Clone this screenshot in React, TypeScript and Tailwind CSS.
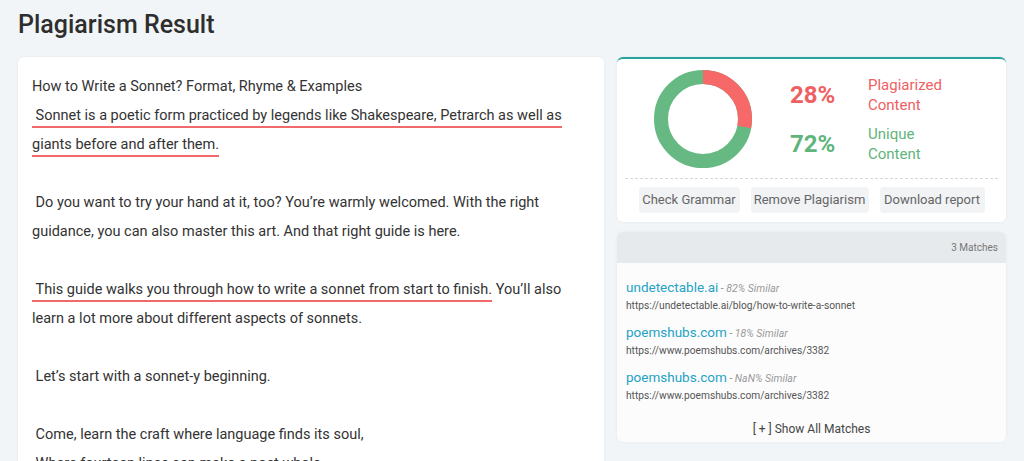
import React from 'react';

// Donut chart for the plagiarized / unique split
const Donut: React.FC<{ percent: number }> = ({ percent }) => {
  const r = 42;
  const c = 2 * Math.PI * r;
  const red = (percent / 100) * c;
  return (
    <svg width="100" height="100" viewBox="0 0 100 100" className="shrink-0">
      <circle cx="50" cy="50" r={r} fill="none" stroke="#67b983" strokeWidth="14" />
      <circle
        cx="50"
        cy="50"
        r={r}
        fill="none"
        stroke="#f76868"
        strokeWidth="14"
        strokeDasharray={`${red} ${c - red}`}
        transform="rotate(-90 50 50)"
      />
    </svg>
  );
};

const Mark: React.FC<{ children: React.ReactNode }> = ({ children }) => (
  <span className="border-b-2 border-[#f06a6c] pb-[2px] [box-decoration-break:clone]">{children}</span>
);

interface Match {
  domain: string;
  similar: string;
  url: string;
}

const matches: Match[] = [
  { domain: 'undetectable.ai', similar: '82%', url: 'https://undetectable.ai/blog/how-to-write-a-sonnet' },
  { domain: 'poemshubs.com', similar: '18%', url: 'https://www.poemshubs.com/archives/3382' },
  { domain: 'poemshubs.com', similar: 'NaN%', url: 'https://www.poemshubs.com/archives/3382' },
];

const App: React.FC = () => {
  return (
    <div className="min-h-screen bg-[#f2f5f7] px-[18px] font-['Roboto',sans-serif] text-[#333]">
      <h1 className="pt-[9px] text-[25px] font-medium leading-[32px] text-[#2e2e2e]">Plagiarism Result</h1>

      <div className="mt-[16px] flex gap-[13px]">
        {/* Submitted text */}
        <div className="h-[420px] w-[586px] shrink-0 rounded-md bg-white pl-[14px] pr-[20px] pt-[15px] text-[14.5px] leading-[29px] text-[#333] shadow-[0_0_3px_rgba(0,0,0,0.06)]">
          <p>How to Write a Sonnet? Format, Rhyme &amp; Examples</p>
          <p>
            <Mark>&nbsp;Sonnet is a poetic form practiced by legends like Shakespeare, Petrarch as well as giants before and after them.</Mark>
          </p>
          <p>&nbsp;</p>
          <p>&nbsp;Do you want to try your hand at it, too? You’re warmly welcomed. With the right guidance, you can also master this art. And that right guide is here.</p>
          <p>&nbsp;</p>
          <p>
            <Mark>&nbsp;This guide walks you through how to write a sonnet from start to finish.</Mark> You’ll also learn a lot more about different aspects of sonnets.
          </p>
          <p>&nbsp;</p>
          <p>&nbsp;Let’s start with a sonnet-y beginning.</p>
          <p>&nbsp;</p>
          <p>&nbsp;Come, learn the craft where language finds its soul,</p>
          <p>&nbsp;Where fourteen lines can make a poet whole.</p>
        </div>

        {/* Result column */}
        <div className="flex w-[391px] flex-col gap-[10px]">
          <div className="rounded-md border-t-2 border-[#2aa3a3] bg-white px-[8px] pb-[9px] pt-[10px] shadow-[0_0_3px_rgba(0,0,0,0.06)]">
            <div className="flex items-center pl-[28px]">
              <Donut percent={28} />
              <div className="ml-[37px] flex flex-col gap-[9px]">
                <div className="flex items-center">
                  <span className="w-[78px] text-[24px] font-bold text-[#f06062]">28%</span>
                  <span className="text-[15px] leading-[20px] text-[#f06062]">
                    Plagiarized
                    <br />
                    Content
                  </span>
                </div>
                <div className="flex items-center">
                  <span className="w-[78px] text-[24px] font-bold text-[#5fb57c]">72%</span>
                  <span className="text-[15px] leading-[20px] text-[#5fb57c]">
                    Unique
                    <br />
                    Content
                  </span>
                </div>
              </div>
            </div>
            <div className="mt-[9px] border-t border-dashed border-[#d6d9dc]" />
            <div className="mt-[8px] flex justify-center gap-[11px] whitespace-nowrap text-[13px] text-[#666]">
              <button className="h-[26px] w-[101px] shrink-0 rounded bg-[#f1f3f5]">Check Grammar</button>
              <button className="h-[26px] w-[118px] shrink-0 rounded bg-[#f1f3f5]">Remove Plagiarism</button>
              <button className="h-[26px] w-[105px] shrink-0 rounded bg-[#f1f3f5]">Download report</button>
            </div>
          </div>

          <div className="overflow-hidden rounded-md bg-[#fcfcfd] shadow-[0_0_3px_rgba(0,0,0,0.06)]">
            <div className="flex h-[31px] items-center justify-end bg-[#e7eaed] px-[8px] text-[10px] text-[#777]">3 Matches</div>
            <div className="flex flex-col gap-[8px] px-[9px] pt-[14px]">
              {matches.map((m, i) => (
                <div key={i}>
                  <div className="h-[20px] text-[13.5px] leading-[20px]">
                    <span className="text-[#25a3c4]">{m.domain}</span>
                    <span className="text-[10.5px] italic text-[#9a9a9a]"> - {m.similar} Similar</span>
                  </div>
                  <div className="h-[17px] pt-[1px] text-[10.2px] leading-[16px] text-[#555]">{m.url}</div>
                </div>
              ))}
            </div>
            <div className="pb-[4px] pt-[16px] text-center text-[12px] leading-[18px] text-[#444]">[ + ] Show All Matches</div>
          </div>
        </div>
      </div>
    </div>
  );
};

export default App;
